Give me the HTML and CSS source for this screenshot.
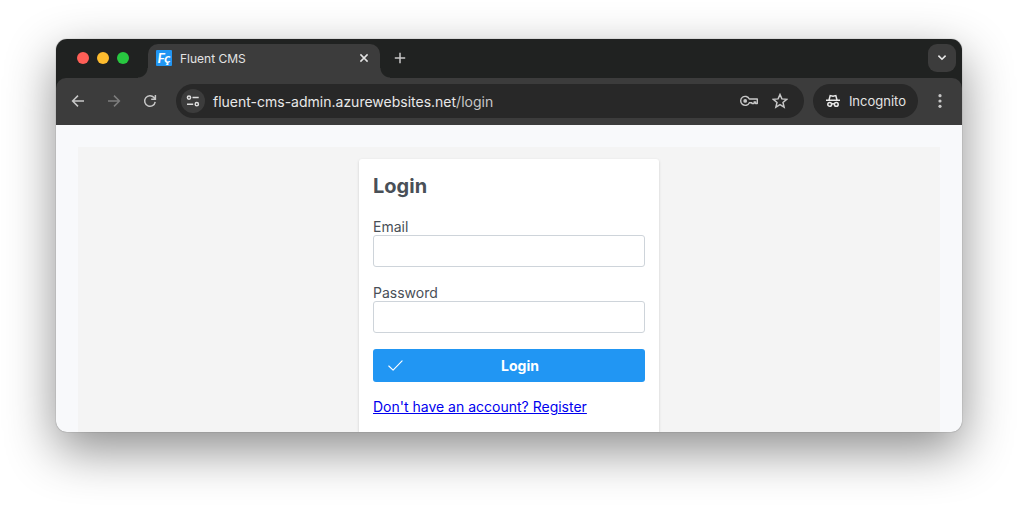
FILE: index.html
```html
<!DOCTYPE html>
<html lang="en">
<head>
<meta charset="utf-8">
<title>Fluent CMS</title>
<link rel="stylesheet" href="styles.css">
</head>
<body>
<div class="window">
  <header class="chrome">
    <div class="tab-strip">
      <div class="lights"><span class="light light-close"></span><span class="light light-min"></span><span class="light light-max"></span></div>
      <div class="tab">
        <span class="favicon" aria-hidden="true">Fç</span>
        <span class="tab-title">Fluent CMS</span>
        <button class="icon-button tab-close" type="button" aria-label="Close tab">
          <svg width="10" height="10" viewBox="0 0 10 10"><path d="M1.4 1.4l7.2 7.2M8.6 1.4L1.4 8.6" stroke="#e3e3e3" stroke-width="1.5" fill="none"/></svg>
        </button>
      </div>
      <button class="icon-button new-tab" type="button" aria-label="New tab">
        <svg width="12" height="12" viewBox="0 0 12 12"><path d="M6 .8v10.4M.8 6h10.4" stroke="#c7c7c7" stroke-width="1.5" fill="none"/></svg>
      </button>
      <button class="icon-button tab-search" type="button" aria-label="Search tabs">
        <svg width="10" height="8" viewBox="0 0 10 8"><path d="M1.4 1.6L5 5.2l3.6-3.6" stroke="#e8e8e8" stroke-width="1.6" fill="none"/></svg>
      </button>
    </div>
    <div class="toolbar">
      <nav class="nav">
        <button class="icon-button" type="button" aria-label="Back">
          <svg width="14" height="14" viewBox="0 0 14 14"><path d="M13 7H2M7 1.6L1.6 7 7 12.4" stroke="#c7c7c7" stroke-width="1.5" fill="none"/></svg>
        </button>
        <button class="icon-button" type="button" aria-label="Forward">
          <svg width="14" height="14" viewBox="0 0 14 14"><path d="M1 7h11M7 1.6L12.4 7 7 12.4" stroke="#7d7d7d" stroke-width="1.5" fill="none"/></svg>
        </button>
        <button class="icon-button" type="button" aria-label="Reload">
          <svg width="14" height="14" viewBox="0 0 14 14"><path d="M12.2 7.8A5.3 5.3 0 1 1 11 3.5l1.3 1.4M12.4 1v4.2H8.2" stroke="#c7c7c7" stroke-width="1.5" fill="none"/></svg>
        </button>
      </nav>
      <div class="omnibox">
        <button class="icon-button site-info" type="button" aria-label="Site information">
          <svg width="14" height="12" viewBox="0 0 14 12"><g stroke="#dedede" stroke-width="1.5" fill="none"><circle cx="3" cy="2.6" r="1.6"/><path d="M6.5 2.6h6.2M1 9.2h6.2"/><circle cx="10.8" cy="9.2" r="1.6"/></g></svg>
        </button>
        <div class="url"><span class="host">fluent-cms-admin.azurewebsites.net</span>/login</div>
        <button class="icon-button" type="button" aria-label="Passwords">
          <svg width="18" height="12" viewBox="0 0 18 12"><path d="M9.3 4h8v4.6h-1.7V7h-1.5v1.6h-2.2V7.7H9.3A4.5 4.5 0 1 1 9.3 4z" stroke="#c7c7c7" stroke-width="1.4" fill="none" stroke-linejoin="round"/><circle cx="5.2" cy="5.9" r="1.9" fill="#c7c7c7"/></svg>
        </button>
        <button class="icon-button" type="button" aria-label="Bookmark">
          <svg width="16" height="16" viewBox="0 0 16 16"><path d="M8 1.5l1.9 4.4 4.8.4L11 9.5l1.1 4.7L8 11.7l-4.1 2.5L5 9.5 1.3 6.3l4.8-.4z" stroke="#c7c7c7" stroke-width="1.5" fill="none"/></svg>
        </button>
      </div>
      <div class="incognito">
        <svg width="16" height="14" viewBox="0 0 16 14"><g stroke="#e8e8e8" stroke-width="1.5" fill="none"><path d="M1 6.3h14M4 6l1.2-4.4L8 2.2l2.8-.6L12 6"/><circle cx="4.7" cy="10.4" r="1.9"/><circle cx="11.3" cy="10.4" r="1.9"/><path d="M6.6 10q1.4-.7 2.8 0"/></g></svg>
        <span>Incognito</span>
      </div>
      <button class="icon-button" type="button" aria-label="Menu">
        <svg width="4" height="14" viewBox="0 0 4 14" fill="#c7c7c7"><circle cx="2" cy="1.7" r="1.6"/><circle cx="2" cy="7" r="1.6"/><circle cx="2" cy="12.3" r="1.6"/></svg>
      </button>
    </div>
  </header>
  <main class="page">
    <div class="backdrop">
      <form class="card">
        <h1 class="title">Login</h1>
        <div class="field">
          <label class="label" for="email">Email</label>
          <input class="input" id="email" type="email">
        </div>
        <div class="field">
          <label class="label" for="password">Password</label>
          <input class="input" id="password" type="password">
        </div>
        <button class="submit" type="button">
          <svg width="16" height="14" viewBox="0 0 16 14"><path d="M1.8 7l4.3 4.2 9-9.4" stroke="#fff" stroke-width="1.1" fill="none" stroke-linecap="round" stroke-linejoin="round"/></svg>
          <span class="submit-label">Login</span>
        </button>
        <a class="register" href="#register">Don't have an account? Register</a>
      </form>
    </div>
  </main>
</div>
</body>
</html>
```
FILE: styles.css
```css
* {
  box-sizing: border-box;
}

body {
  margin: 0;
  height: 100vh;
  padding: 39px 56px 74px;
  background: #fff;
  font-family: Inter, "Liberation Sans", sans-serif;
  font-size: 14px;
  line-height: 17px;
  color: #495057;
  display: flex;
}

button {
  font: inherit;
  border: 0;
  margin: 0;
  cursor: pointer;
}

svg {
  display: block;
  flex: none;
}

.window {
  flex: 1;
  min-width: 0;
  display: flex;
  flex-direction: column;
  overflow: hidden;
  border-radius: 11px;
  background: #f8f9fb;
  box-shadow: 0 0 1px rgba(0, 0, 0, 0.6), 0 18px 50px rgba(0, 0, 0, 0.45);
}

.chrome {
  background: #202221;
  color: #e3e3e3;
}

.tab-strip {
  display: flex;
  align-items: center;
  height: 39px;
  padding: 0 6px 1px 21px;
}

.lights {
  display: flex;
  gap: 8px;
  margin-right: 19px;
}

.light {
  width: 12px;
  height: 12px;
  border-radius: 50%;
}

.light-close { background: #ff5f57; }
.light-min { background: #febc2e; }
.light-max { background: #28c840; }

.tab {
  position: relative;
  align-self: flex-end;
  display: flex;
  align-items: center;
  gap: 8px;
  width: 232px;
  height: 34px;
  margin-bottom: -1px;
  padding: 0 11px 6px 8px;
  border-radius: 10px 10px 0 0;
  background: #3c3c3c;
}

.tab::before,
.tab::after {
  content: "";
  position: absolute;
  bottom: 0;
  width: 10px;
  height: 10px;
}

.tab::before {
  right: 100%;
  background: radial-gradient(circle at 0 0, transparent 9px, #3c3c3c 10px);
}

.tab::after {
  left: 100%;
  background: radial-gradient(circle at 100% 0, transparent 9px, #3c3c3c 10px);
}

.favicon {
  width: 16px;
  height: 16px;
  border-radius: 1px;
  background: #2196f3;
  color: #fff;
  font: italic 700 14px/15px Lato, sans-serif;
  text-align: center;
}

.tab-title {
  flex: 1;
  font-size: 12px;
}

.icon-button {
  display: flex;
  align-items: center;
  justify-content: center;
  padding: 0;
  background: none;
}

.new-tab {
  margin-left: 14px;
}

.tab-search {
  width: 28px;
  height: 28px;
  margin-left: auto;
  border-radius: 9px;
  background: #3c3c3c;
}

.toolbar {
  display: flex;
  align-items: center;
  gap: 9px;
  height: 47px;
  padding: 0 20px 1px 15px;
  border-radius: 10px 10px 0 0;
  background: #3c3c3c;
}

.nav {
  display: flex;
  gap: 22px;
  margin-right: 10px;
}

.omnibox {
  flex: 1;
  min-width: 0;
  display: flex;
  align-items: center;
  gap: 14px;
  height: 34px;
  padding: 0 16px 0 5px;
  border-radius: 17px;
  background: #282828;
}

.site-info {
  width: 24px;
  height: 24px;
  margin-right: -6px;
  border-radius: 50%;
  background: #3c3c3c;
}

.url {
  flex: 1;
  min-width: 0;
  white-space: nowrap;
  color: #c7c7c7;
}

.host {
  color: #e8e8e8;
}

.incognito {
  display: flex;
  align-items: center;
  gap: 8px;
  height: 34px;
  margin-right: 11px;
  padding: 0 12px;
  border-radius: 17px;
  background: #282828;
  font-size: 13px;
}

.page {
  flex: 1;
  min-height: 0;
  padding: 22px 22px 0;
}

.backdrop {
  height: 100%;
  padding-top: 12px;
  background: #f4f4f4;
}

.card {
  display: flex;
  flex-direction: column;
  max-width: 300px;
  margin: 0 auto;
  padding: 13px 14px 28px;
  border-radius: 3px;
  background: #fff;
  box-shadow: 0 1px 3px rgba(0, 0, 0, 0.16);
}

.title {
  margin: 0 0 18px;
  font-size: 20px;
  line-height: 28px;
  font-weight: 700;
}

.field {
  display: flex;
  flex-direction: column;
}

.field + .field {
  margin-top: 17px;
}

.input {
  width: 100%;
  height: 32px;
  padding: 0 10px;
  border: 1px solid #ced4da;
  border-radius: 3px;
  background: #fff;
  font: inherit;
  color: inherit;
}

.submit {
  display: flex;
  align-items: center;
  gap: 6px;
  height: 33px;
  margin: 16px 0;
  padding: 0 14px;
  border-radius: 3px;
  background: #2196f3;
  color: #fff;
  font-weight: 700;
}

.submit-label {
  flex: 1;
}

.register {
  align-self: flex-start;
  color: #0000ee;
}
```
